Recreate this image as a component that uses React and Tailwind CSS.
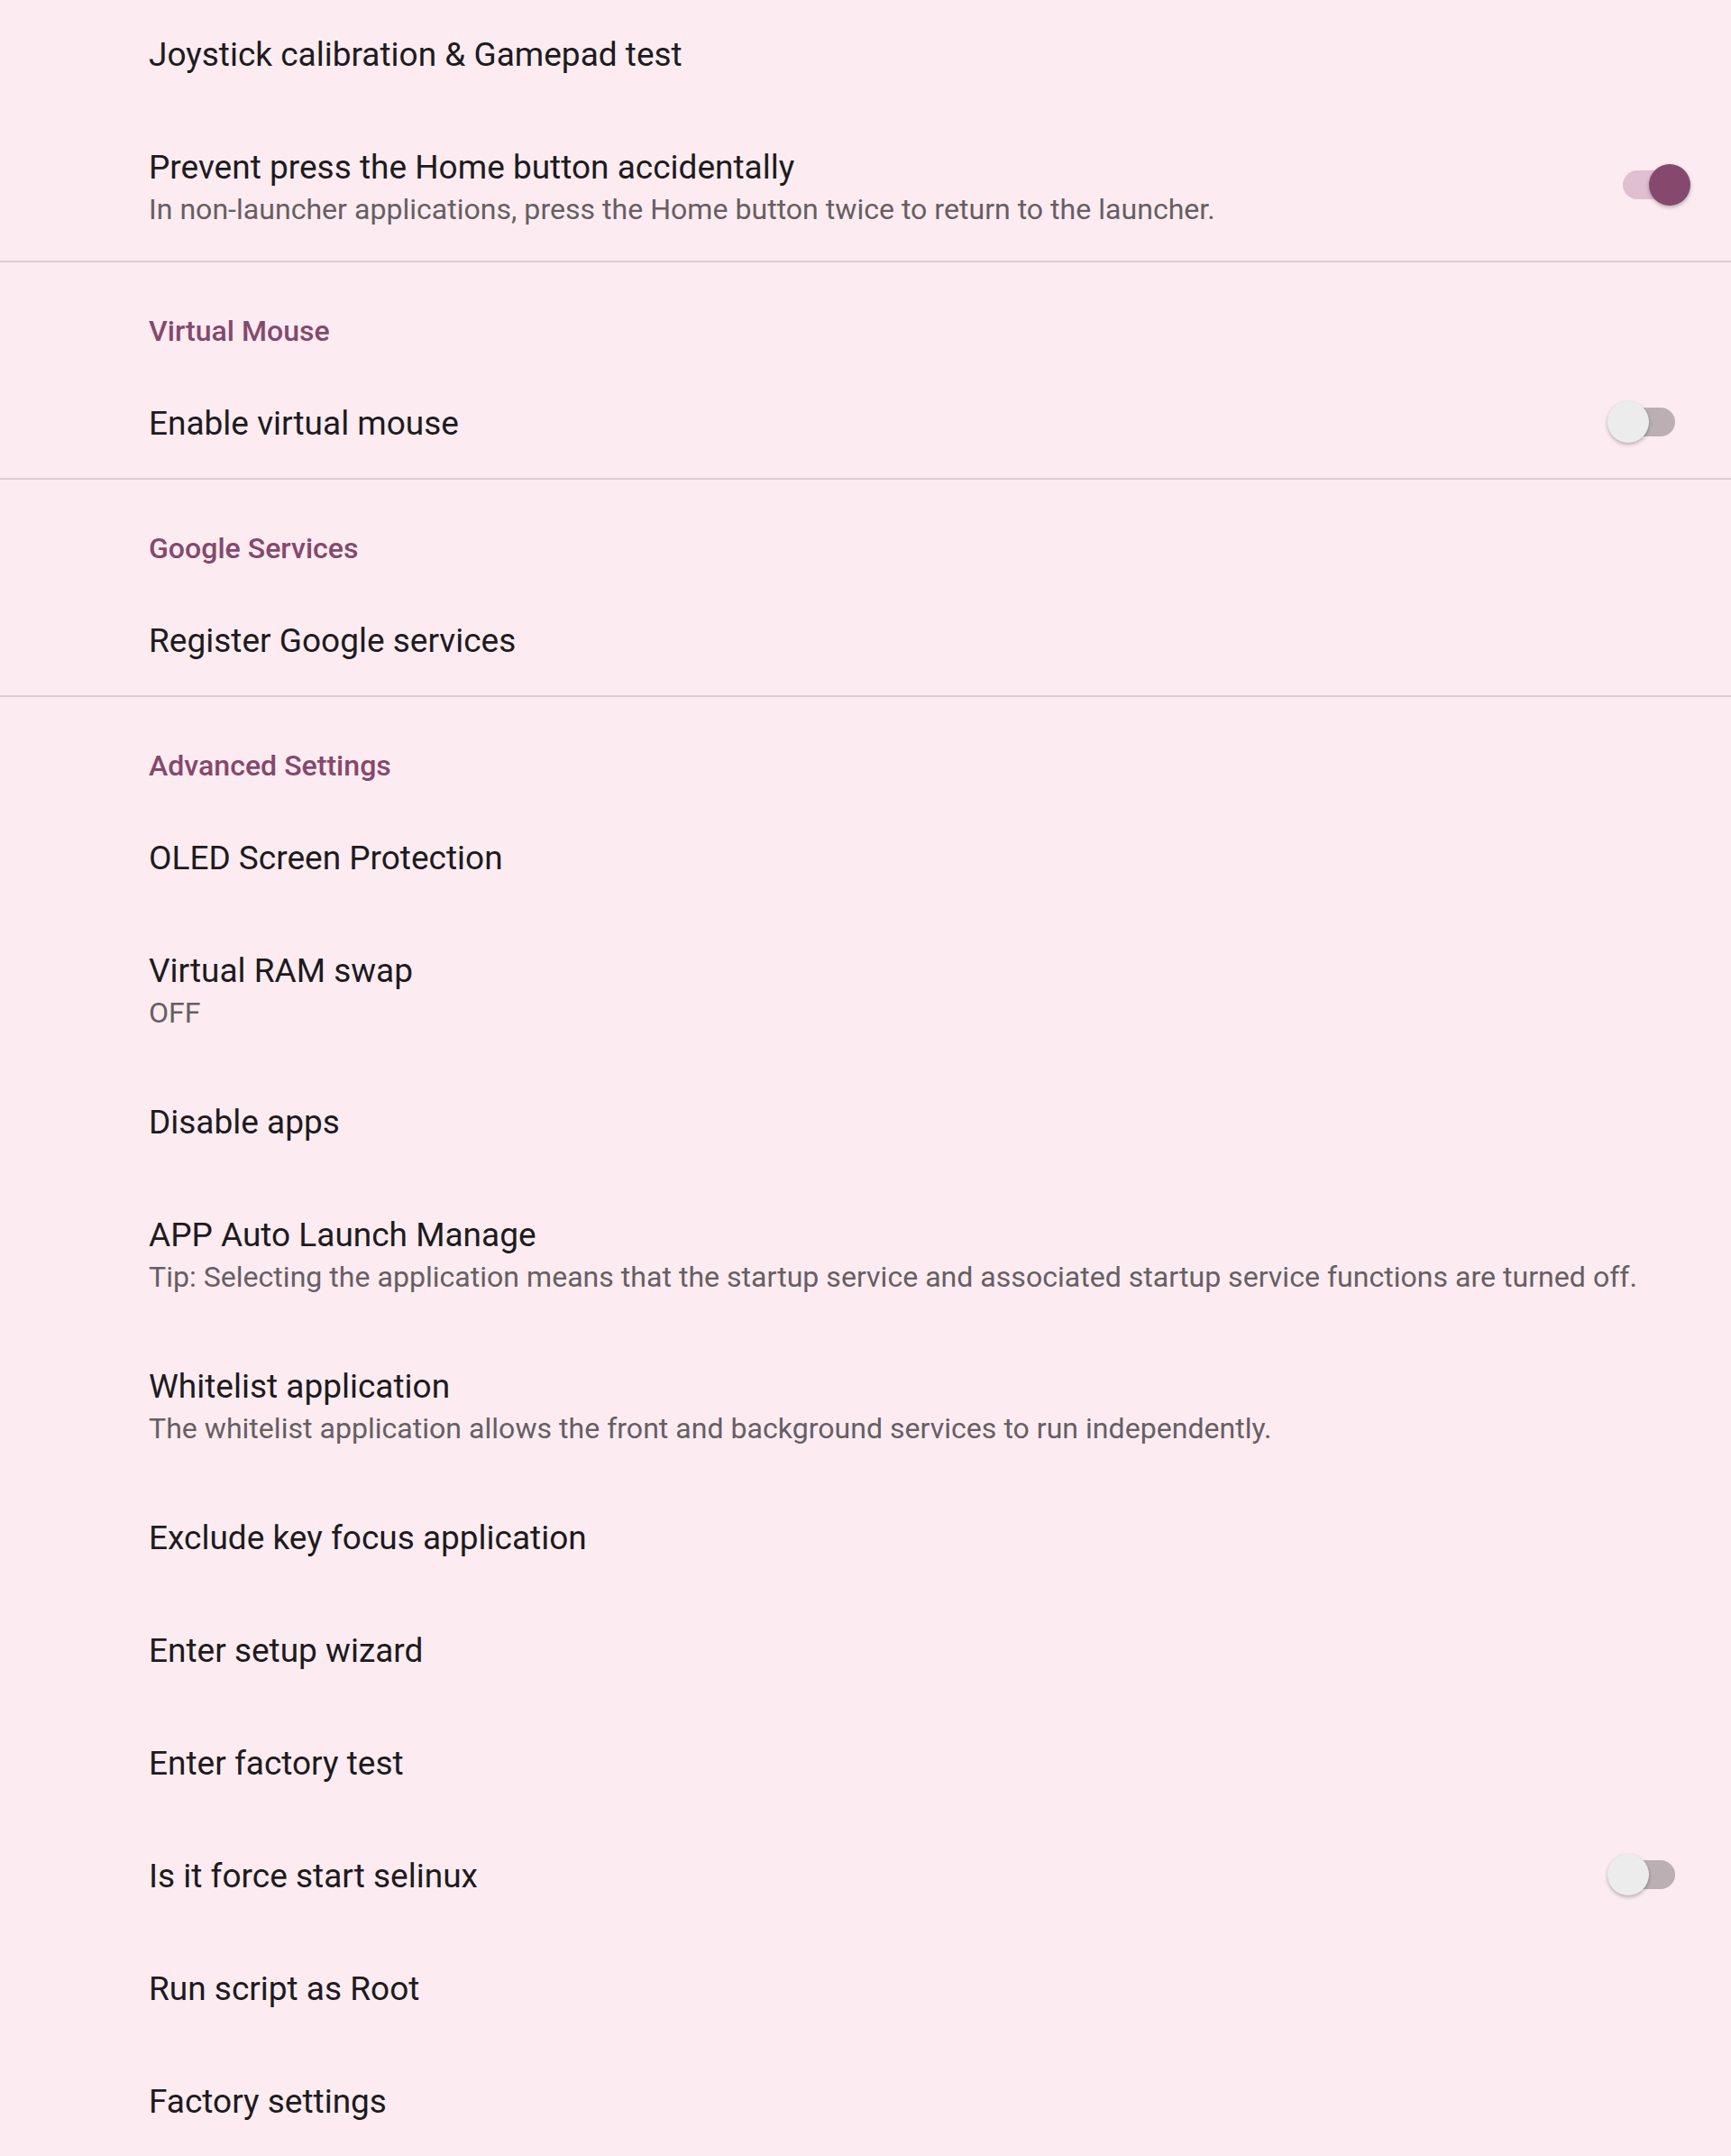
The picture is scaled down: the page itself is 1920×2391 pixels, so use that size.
import React from "react";

function Toggle({ on }) {
  return (
    <div className="relative w-[58px] h-[32px] shrink-0">
      <div
        className={
          "w-[58px] h-[32px] rounded-full " +
          (on ? "bg-[#dfbfd0]" : "bg-[#bbafb4]")
        }
      />
      <div
        className={
          "absolute top-[-7px] w-[46px] h-[46px] rounded-full shadow-[0_2px_4px_rgba(0,0,0,0.28)] " +
          (on ? "left-[29px] bg-[#86496d]" : "left-[-17px] bg-[#ececec]")
        }
      />
    </div>
  );
}

function Item({ title, summary, toggle }) {
  return (
    <div
      className={
        "flex flex-row items-center justify-between pl-[165px] pr-[62px] " +
        (summary ? "h-[168px]" : "h-[125px]")
      }
    >
      <div className="flex flex-col self-start pt-[44px]">
        <div className="text-[37px] leading-[42px] text-[#201a1d] whitespace-nowrap">
          {title}
        </div>
        {summary && (
          <div className="mt-[7px] text-[32.1px] leading-[37px] text-[#675e63] whitespace-nowrap">
            {summary}
          </div>
        )}
      </div>
      {toggle !== undefined && <Toggle on={toggle} />}
    </div>
  );
}

function Header({ children }) {
  return (
    <div className="h-[114px] pl-[165px] pt-[58px]">
      <div className="text-[32.1px] leading-[37px] font-medium text-[#85486c]">
        {children}
      </div>
    </div>
  );
}

function Divider() {
  return <div className="h-[2px] bg-[#ddcdd3]" />;
}

export default function App() {
  return (
    <div className="w-[1920px] h-[2391px] overflow-hidden bg-[#fcecf2] font-['Roboto','Noto_Sans',sans-serif]">
      <div className="-mt-[4px] flex flex-col">
        <Item title="Joystick calibration & Gamepad test" />
        <Item
          title="Prevent press the Home button accidentally"
          summary="In non-launcher applications, press the Home button twice to return to the launcher."
          toggle={true}
        />
        <Divider />
        <Header>Virtual Mouse</Header>
        <Item title="Enable virtual mouse" toggle={false} />
        <Divider />
        <Header>Google Services</Header>
        <Item title="Register Google services" />
        <Divider />
        <Header>Advanced Settings</Header>
        <Item title="OLED Screen Protection" />
        <Item title="Virtual RAM swap" summary="OFF" />
        <Item title="Disable apps" />
        <Item
          title="APP Auto Launch Manage"
          summary="Tip: Selecting the application means that the startup service and associated startup service functions are turned off."
        />
        <Item
          title="Whitelist application"
          summary="The whitelist application allows the front and background services to run independently."
        />
        <Item title="Exclude key focus application" />
        <Item title="Enter setup wizard" />
        <Item title="Enter factory test" />
        <Item title="Is it force start selinux" toggle={false} />
        <Item title="Run script as Root" />
        <Item title="Factory settings" />
      </div>
    </div>
  );
}
